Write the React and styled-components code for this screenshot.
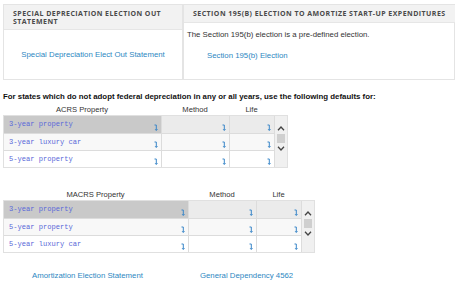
import React from "react";
import styled, { createGlobalStyle } from "styled-components";

const GlobalStyle = createGlobalStyle`
  body {
    margin: 0;
    background: #fff;
    font-family: "Liberation Sans", Arial, sans-serif;
    color: #333;
  }
`;

const Page = styled.div`
  width: 460px;
  height: 286px;
  padding: 4px 5px 0 3px;
  box-sizing: border-box;
  overflow: hidden;
`;

const Elections = styled.div`
  display: grid;
  grid-template-columns: 178px 1fr;
  height: 76px;
  border: 1px solid #e4e4e4;
  box-sizing: border-box;
`;

const Box = styled.div`
  display: flex;
  flex-direction: column;
  border-left: ${(p) => (p.divided ? "2px solid #e4e4e4" : "none")};
`;

const BoxHead = styled.div`
  background: #f2f2f2;
  border-bottom: 1px solid #e6e6e6;
  padding: 5px 9px 4px;
  font-family: "Open Sans", sans-serif;
  font-weight: 700;
  font-size: 7px;
  line-height: 7.5px;
  letter-spacing: 0.45px;
  color: #4a4a4a;
  text-transform: uppercase;
  white-space: nowrap;
`;

const BoxBody = styled.div`
  flex: 1;
  display: flex;
  flex-direction: column;
  align-items: ${(p) => (p.center ? "center" : "flex-start")};
  justify-content: ${(p) => (p.center ? "center" : "flex-start")};
  padding: ${(p) => (p.center ? "0" : "7px 0 0 3px")};
`;

const Link = styled.a`
  color: #2d87c2;
  font-size: 7.8px;
  text-decoration: none;
  margin: ${(p) => p.indent || "0"};
`;

const Note = styled.div`
  font-size: 7.8px;
  color: #333;
`;

const Lead = styled.div`
  margin-top: 12px;
  font-size: 7.85px;
  font-weight: 700;
  color: #111;
`;

const TableWrap = styled.div`
  margin-top: ${(p) => p.top}px;
`;

const HeadRow = styled.div`
  display: grid;
  grid-template-columns: ${(p) => p.cols};
  font-size: 7.6px;
  color: #333;
  line-height: 9px;
  margin-bottom: 1px;
  & > span {
    text-align: center;
  }
`;

const Grid = styled.div`
  display: grid;
  grid-template-columns: ${(p) => p.cols};
  grid-template-rows: 18px 17px 16px;
  border: 1px solid #e0e0e0;
  width: max-content;
`;

const Cell = styled.div`
  background: ${(p) => p.bg};
  border-right: 1px solid #dcdcdc;
  border-bottom: ${(p) => (p.last ? "none" : "1px solid #dcdcdc")};
  box-sizing: border-box;
  padding: 4px 0 0 5px;
  font-family: "Liberation Mono", "Courier New", monospace;
  font-size: 7.1px;
  color: #5b6ad9;
  display: flex;
  align-items: flex-start;
  justify-content: space-between;
`;

const Pick = styled.svg`
  align-self: flex-end;
  margin: 0 3px 2px 0;
  flex: none;
`;

const Scroll = styled.div`
  grid-column: 4;
  grid-row: 1 / span 3;
  background: #f0f0f0;
  display: flex;
  flex-direction: column;
  align-items: center;
  padding-top: 10px;
  gap: 3px;
`;

const Thumb = styled.div`
  width: 8px;
  height: 9px;
  background: #cfcfcf;
`;

const Footer = styled.div`
  display: flex;
  margin-top: 18px;
  padding-left: 29px;
  gap: 57px;
`;

const PickIcon = () => (
  <Pick width="4" height="7" viewBox="0 0 4 7">
    <path d="M0.5 1 H2.3 V6.2" stroke="#3a86c8" strokeWidth="1" fill="none" />
    <path d="M1 5 L2.3 6.6 L3.6 5" stroke="#3a86c8" strokeWidth="0.8" fill="none" />
  </Pick>
);

const Chevron = ({ up }) => (
  <svg width="8" height="5" viewBox="0 0 8 5">
    <path
      d={up ? "M1 4.2 L4 1 L7 4.2" : "M1 0.8 L4 4 L7 0.8"}
      stroke="#444"
      strokeWidth="1.3"
      fill="none"
    />
  </svg>
);

const rowBg = (r, c) => {
  if (r === 0) return c === 0 ? "#c9c9c9" : "#ebebeb";
  if (r === 1) return "#f8f8f8";
  return "#fff";
};

function PropertyTable({ title, first, rows, top }) {
  const cols = `${first}px 68px 45px 12px`;
  return (
    <TableWrap top={top}>
      <HeadRow cols={cols}>
        <span>{title}</span>
        <span>Method</span>
        <span>Life</span>
      </HeadRow>
      <Grid cols={cols}>
        {rows.map((name, r) =>
          [0, 1, 2].map((c) => (
            <Cell key={`${r}-${c}`} bg={rowBg(r, c)} last={r === 2}>
              <span>{c === 0 ? name : ""}</span>
              <PickIcon />
            </Cell>
          ))
        )}
        <Scroll>
          <Chevron up />
          <Thumb />
          <Chevron />
        </Scroll>
      </Grid>
    </TableWrap>
  );
}

export default function App() {
  return (
    <Page>
      <GlobalStyle />
      <Elections>
        <Box>
          <BoxHead>
            Special Depreciation Election Out
            <br />
            Statement
          </BoxHead>
          <BoxBody center>
            <Link href="#">Special Depreciation Elect Out Statement</Link>
          </BoxBody>
        </Box>
        <Box divided>
          <BoxHead>Section 195(b) Election to Amortize Start-Up Expenditures</BoxHead>
          <BoxBody>
            <Note>The Section 195(b) election is a pre-defined election.</Note>
            <Link href="#" indent="12px 0 0 20px">
              Section 195(b) Election
            </Link>
          </BoxBody>
        </Box>
      </Elections>
      <Lead>
        For states which do not adopt federal depreciation in any or all years, use the following defaults for:
      </Lead>
      <PropertyTable
        title="ACRS Property"
        first={158}
        top={4}
        rows={["3-year property", "3-year luxury car", "5-year property"]}
      />
      <PropertyTable
        title="MACRS Property"
        first={185}
        top={22}
        rows={["3-year property", "5-year property", "5-year luxury car"]}
      />
      <Footer>
        <Link href="#">Amortization Election Statement</Link>
        <Link href="#">General Dependency 4562</Link>
      </Footer>
    </Page>
  );
}
